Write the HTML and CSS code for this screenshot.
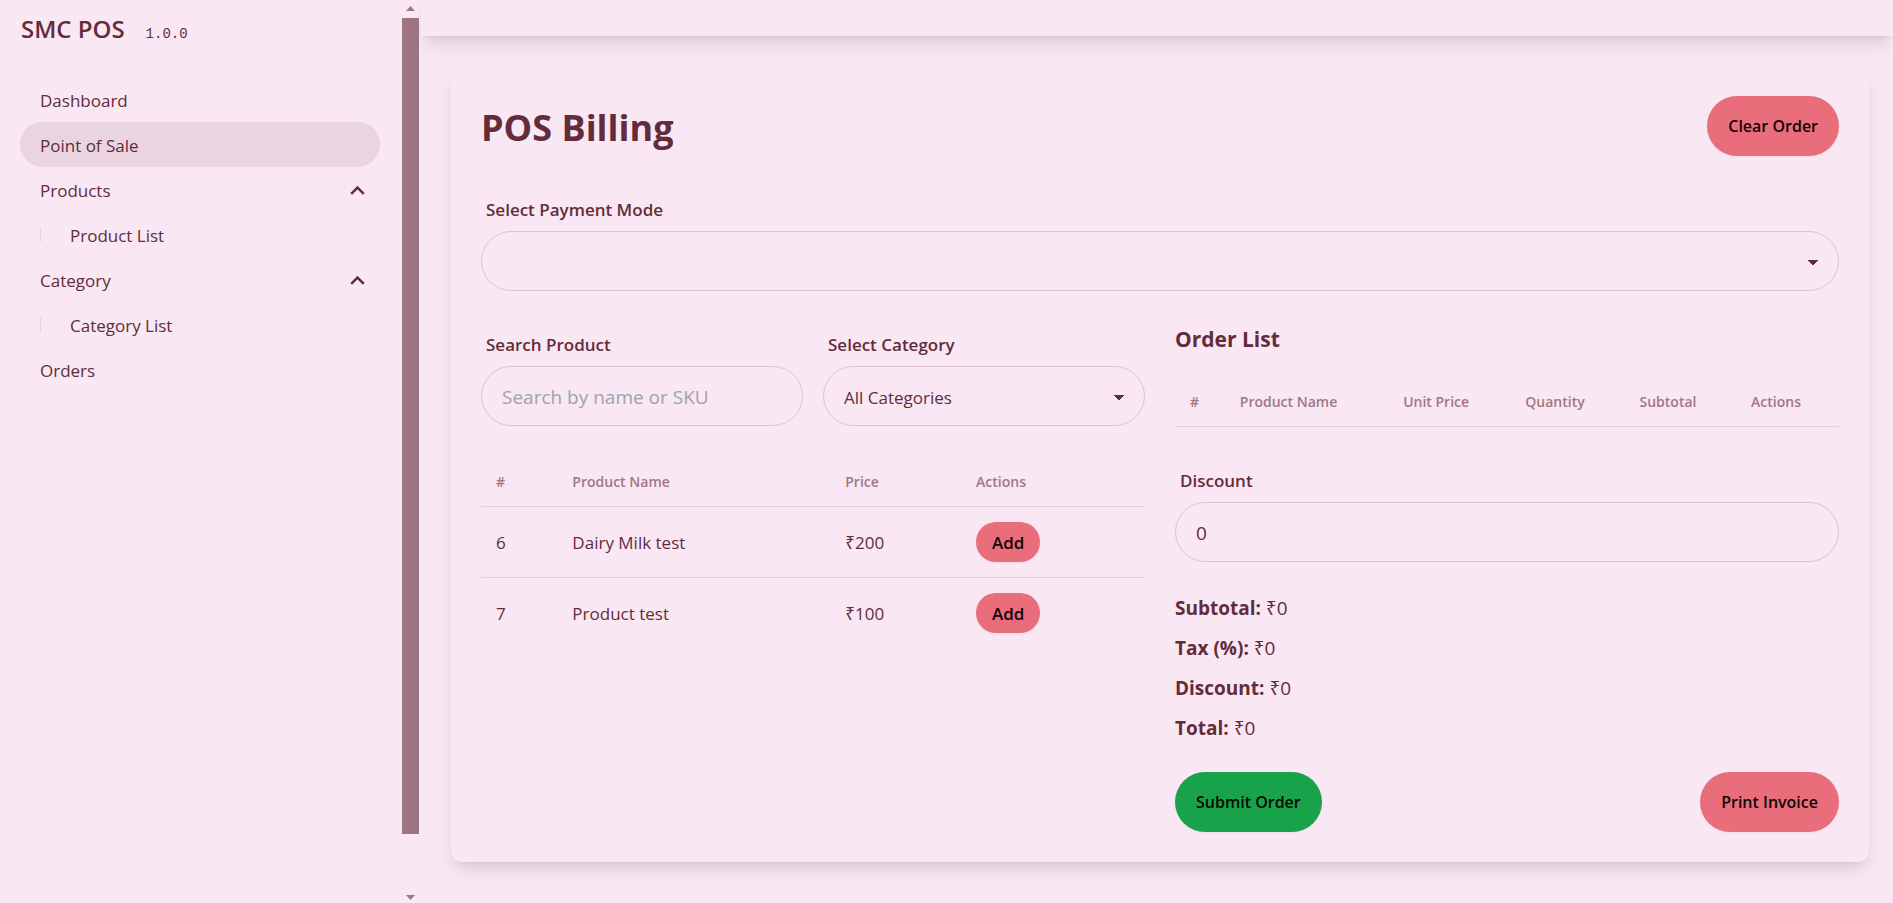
FILE: index.html
```html
<!DOCTYPE html>
<html lang="en">
<head>
<meta charset="utf-8">
<meta name="viewport" content="width=device-width, initial-scale=1">
<title>SMC POS</title>
<link rel="stylesheet" href="styles.css">
</head>
<body>
<div class="app">
  <aside class="sidebar">
    <div class="sidebar-content">
      <div class="brand">
        <a class="brand-name" href="#">SMC POS</a>
        <span class="brand-version">1.0.0</span>
      </div>
      <nav>
        <ul class="menu">
          <li><a class="menu-item" href="#">Dashboard</a></li>
          <li><a class="menu-item active" href="#" aria-current="page">Point of Sale</a></li>
          <li>
            <button class="menu-item" type="button" aria-expanded="true">Products
              <svg class="chevron" viewBox="0 0 15 9" aria-hidden="true"><path d="M1.2 7.8 7.5 1.6 13.8 7.8"/></svg>
            </button>
            <ul class="submenu"><li><a class="menu-item" href="#">Product List</a></li></ul>
          </li>
          <li>
            <button class="menu-item" type="button" aria-expanded="true">Category
              <svg class="chevron" viewBox="0 0 15 9" aria-hidden="true"><path d="M1.2 7.8 7.5 1.6 13.8 7.8"/></svg>
            </button>
            <ul class="submenu"><li><a class="menu-item" href="#">Category List</a></li></ul>
          </li>
          <li><a class="menu-item" href="#">Orders</a></li>
        </ul>
      </nav>
    </div>
    <div class="scrollbar" aria-hidden="true">
      <svg class="scroll-arrow" viewBox="0 0 9 5"><path d="M0 5 4.5 0 9 5Z"/></svg>
      <div class="scroll-track"><div class="scroll-thumb"></div></div>
      <svg class="scroll-arrow" viewBox="0 0 9 5"><path d="M0 0 4.5 5 9 0Z"/></svg>
    </div>
  </aside>
  <div class="page">
    <header class="topbar"></header>
    <main class="card">
      <div class="card-head">
        <h1 class="title">POS Billing</h1>
        <button class="btn" type="button">Clear Order</button>
      </div>
      <div class="field">
        <label class="label" for="payment">Select Payment Mode</label>
        <select class="control select" id="payment"><option></option></select>
      </div>
      <div class="columns">
        <section class="products">
          <div class="filters">
            <div class="field">
              <label class="label" for="search">Search Product</label>
              <input class="control input" id="search" type="text" placeholder="Search by name or SKU">
            </div>
            <div class="field">
              <label class="label" for="category">Select Category</label>
              <select class="control select" id="category"><option>All Categories</option></select>
            </div>
          </div>
          <table class="table">
            <colgroup><col class="p-id"><col class="p-name"><col class="p-price"><col></colgroup>
            <thead><tr><th>#</th><th>Product Name</th><th>Price</th><th>Actions</th></tr></thead>
            <tbody>
              <tr><td>6</td><td>Dairy Milk test</td><td>₹200</td><td><button class="btn btn-small" type="button">Add</button></td></tr>
              <tr><td>7</td><td>Product test</td><td>₹100</td><td><button class="btn btn-small" type="button">Add</button></td></tr>
            </tbody>
          </table>
        </section>
        <section class="order">
          <h2 class="subtitle">Order List</h2>
          <table class="table">
            <colgroup><col class="o-id"><col class="o-name"><col class="o-price"><col class="o-qty"><col class="o-sub"><col></colgroup>
            <thead><tr><th>#</th><th>Product Name</th><th>Unit Price</th><th>Quantity</th><th>Subtotal</th><th>Actions</th></tr></thead>
          </table>
          <div class="field discount">
            <label class="label" for="discount">Discount</label>
            <input class="control input" id="discount" type="text" inputmode="numeric" value="0">
          </div>
          <div class="totals">
            <p><strong>Subtotal:</strong> ₹0</p>
            <p><strong>Tax (%):</strong> ₹0</p>
            <p><strong>Discount:</strong> ₹0</p>
            <p><strong>Total:</strong> ₹0</p>
          </div>
          <div class="order-actions">
            <button class="btn btn-success" type="button">Submit Order</button>
            <button class="btn" type="button">Print Invoice</button>
          </div>
        </section>
      </div>
    </main>
  </div>
</div>
</body>
</html>
```
FILE: styles.css
```css
:root {
  --base: #f9e7f3;
  --content: #632c3b;
  --muted: #a17685;
  --primary: #e96d7b;
  --success: #18a34a;
  --shadow: 0 12px 19px -4px rgba(0, 0, 0, 0.1), 0 5px 8px -5px rgba(0, 0, 0, 0.1);
}

* { box-sizing: border-box; }

body {
  margin: 0;
  background: var(--base);
  color: var(--content);
  font-family: "Open Sans", "Noto Sans", sans-serif;
  font-size: 17px;
  line-height: 25px;
}

h1, h2, p, ul { margin: 0; padding: 0; }
ul { list-style: none; }
a { color: inherit; text-decoration: none; }
button, input, select { font: inherit; color: inherit; }

.app { display: flex; min-height: 100vh; }

/* Sidebar */
.sidebar {
  display: flex;
  flex: none;
  width: 421px;
  height: 100vh;
  padding-right: 2px;
}
.sidebar-content { flex: 1; padding: 0 22px 0 20px; }
.brand {
  display: flex;
  align-items: baseline;
  gap: 21px;
  height: 77px;
  padding: 11px 0 0 1px;
}
.brand-name { font-size: 24px; font-weight: 600; line-height: 35px; }
.brand-version { font-family: "Liberation Mono", monospace; font-size: 14px; }
.menu-item {
  display: flex;
  align-items: center;
  justify-content: space-between;
  width: 100%;
  padding: 11px 15px 9px 20px;
  border: 0;
  border-radius: 23px;
  background: none;
  text-align: left;
}
.menu-item.active { background: #ead4e0; }
.submenu { position: relative; margin-left: 20px; padding-left: 10px; }
.submenu::before {
  content: "";
  position: absolute;
  inset: 15px auto 15px 0;
  width: 1px;
  background: #ead4e0;
}
.chevron {
  width: 15px;
  height: 9px;
  fill: none;
  stroke: var(--content);
  stroke-width: 2.5;
}

.scrollbar {
  display: flex;
  flex-direction: column;
  align-items: center;
  width: 17px;
  padding: 6px 0 3px;
}
.scroll-arrow { flex: none; width: 9px; height: 5px; fill: var(--muted); }
.scroll-track { flex: 1; width: 100%; padding: 7px 0; }
.scroll-thumb { height: 93.75%; background: #9f7584; }

/* Page */
.page { flex: 1; min-width: 0; }
.topbar { height: 36px; background: var(--base); box-shadow: var(--shadow); }
.card {
  margin: 30px 24px 41px 30px;
  padding: 30px;
  border-radius: 10px;
  background: var(--base);
  box-shadow: var(--shadow);
}
.card-head {
  display: flex;
  align-items: center;
  justify-content: space-between;
  margin-bottom: 30px;
}
.title { padding-top: 3px; font-size: 36px; font-weight: 700; line-height: 45px; }
.subtitle {
  margin-bottom: 20px;
  padding-top: 2px;
  font-size: 21px;
  font-weight: 700;
  line-height: 33px;
}

.btn {
  height: 60px;
  padding: 0 21px;
  border: 0;
  border-radius: 30px;
  background: var(--primary);
  box-shadow: 0 1px 3px rgba(0, 0, 0, 0.05);
  color: #130406;
  font-size: 16px;
  font-weight: 600;
}
.btn-small {
  display: block;
  height: 40px;
  padding: 0 16px;
  border-radius: 20px;
  font-size: 17px;
}
.btn-success { background: var(--success); color: #000a02; }

.label { display: block; padding: 11px 5px 9px; font-weight: 600; }
.control {
  display: block;
  width: 100%;
  height: 60px;
  padding: 2px 20px 0;
  border: 1px solid #dfc3d0;
  border-radius: 30px;
  background-color: transparent;
  outline: 0;
}
.input { font-size: 19px; }
.input::placeholder { color: #9ca3af; opacity: 1; }
.select {
  appearance: none;
  background-image:
    linear-gradient(45deg, transparent 50%, var(--content) 50%),
    linear-gradient(135deg, var(--content) 50%, transparent 50%);
  background-position: calc(100% - 25px) calc(50% + 2px), calc(100% - 20px) calc(50% + 2px);
  background-size: 5px 6px;
  background-repeat: no-repeat;
}

.columns {
  display: grid;
  grid-template-columns: 1fr 1fr;
  gap: 30px;
  margin-top: 30px;
}
.filters {
  display: grid;
  grid-template-columns: 1fr 1fr;
  gap: 20px;
  margin-bottom: 30px;
}

.table { width: 100%; border-collapse: separate; border-spacing: 0; table-layout: fixed; }
.table th, .table td { padding: 15px; text-align: left; }
.table th {
  padding: 16px 15px 14px;
  border-bottom: 1px solid #e4cfdb;
  color: var(--muted);
  font-size: 14px;
  font-weight: 600;
  line-height: 20px;
}
.table tr:not(:last-child) td { border-bottom: 1px solid #e4cfdb; }
.p-id { width: 11.5%; }
.p-name { width: 41.1%; }
.p-price { width: 19.7%; }
.o-id { width: 7.5%; }
.o-name { width: 24.6%; }
.o-price { width: 18.4%; }
.o-qty { width: 17.2%; }
.o-sub { width: 16.8%; }

.discount { margin: 30px 0; }
.totals { display: grid; gap: 10px; padding-top: 1px; font-size: 19px; line-height: 30px; }
.order-actions { display: flex; justify-content: space-between; margin-top: 29px; }
```
